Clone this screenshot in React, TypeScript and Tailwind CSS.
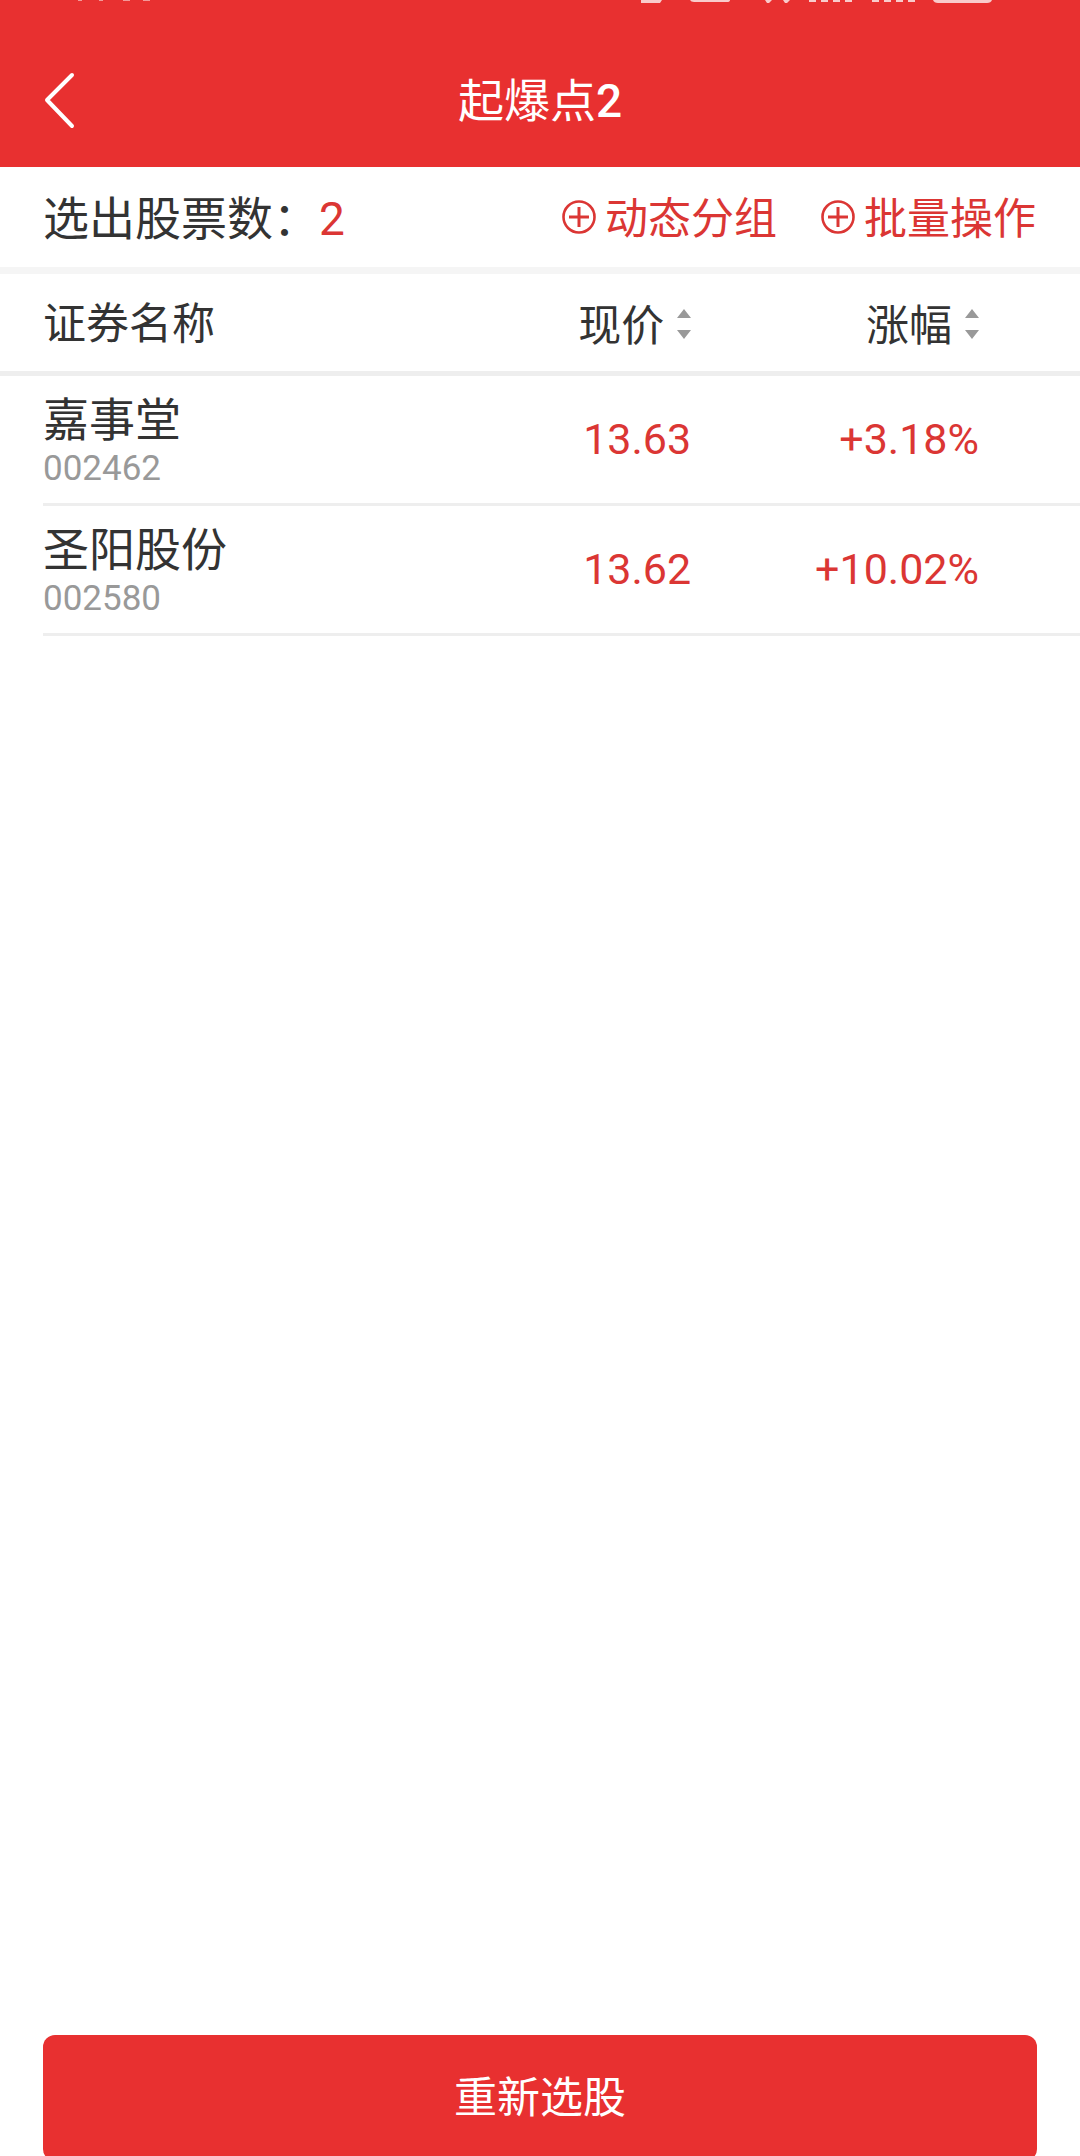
type Stock = { name: string; code: string; price: string; change: string };

const stocks: Stock[] = [
    { name: "嘉事堂", code: "002462", price: "13.63", change: "+3.18%" },
    { name: "圣阳股份", code: "002580", price: "13.62", change: "+10.02%" },
];

const StatusBar = () => {
    return (
        <div className="flex justify-between pl-[76px] pr-[80px] text-white h-[4px]">
            <svg width="80" height="4" fill="currentColor" opacity="0.5" aria-hidden="true">
                <path d="M2 0h4v1H2zM23 0h4v1h-4zM47 0h7v1h-7zM67 0h7v1h-7z" />
            </svg>
            <svg width="360" height="4" fill="currentColor" opacity="0.75" aria-hidden="true">
                <path d="M1 0h21l-2 3H1zM50 0h40q0 2-3 2H54q-3 0-4-2zM125 0h7l-3 3h-2zM143 0h7l-3 3h-2z" />
                <path d="M169 0h7v2h-7zM181 0h7v2h-7zM193 0h7v2h-7zM205 0h7v2h-7z" />
                <path d="M232 0h7v2h-7zM244 0h7v2h-7zM256 0h7v2h-7zM268 0h7v2h-7z" />
                <path d="M293 0h59q-1 3-5 3H298q-4 0-5-3z" />
            </svg>
        </div>
    );
}

const PlusCircle = () => {
    return (
        <svg width="34" height="34" viewBox="0 0 34 34" fill="none" stroke="currentColor" aria-hidden="true">
            <circle cx="17" cy="17" r="15.5" strokeWidth="2.6" />
            <path d="M17 7v20M7 17h20" strokeWidth="3" />
        </svg>
    );
}

const ActionButton = ({label}:{label:string}) => {
    return (
        <button type="button" className="flex items-center gap-[9px] text-[43px] leading-[60px]">
            <PlusCircle />
            <span className="pt-1">{label}</span>
        </button>
    );
}

const SortButton = ({label}:{label:string}) => {
    return (
        <button type="button" className="inline-flex items-center gap-[13px] align-middle leading-[60px]">
            <span className="pt-1">{label}</span>
            <svg width="14" height="30" viewBox="0 0 14 30" fill="#999" aria-hidden="true">
                <path d="M7 0l7 9H0zM7 30l7-9H0z" />
            </svg>
        </button>
    );
}

const StockRow = ({name,code,price,change}:Stock) => {
    return (
        <tr>
            <td className="p-0 pl-[43px]">
                <div className="flex flex-col justify-center h-[130px] pt-1 border-b-3 border-[#eee]">
                    <span className="text-[46px] leading-[54px] text-[#333]">{name}</span>
                    <span className="text-[35px] leading-[44px] text-[#999]">{code}</span>
                </div>
            </td>
            <td className="p-0 text-right text-[43px] text-[#db3634]">
                <div className="flex items-center justify-end h-[130px] border-b-3 border-[#eee]">{price}</div>
            </td>
            <td className="p-0 text-right text-[43px] text-[#db3634]">
                <div className="flex items-center justify-end h-[130px] border-b-3 border-[#eee] pr-[101px]">{change}</div>
            </td>
        </tr>
    );
}

const App = () => {
    return (
        <div className="flex flex-col h-screen overflow-hidden bg-white text-[#333] font-[Roboto,'Noto_Sans_CJK_SC',sans-serif]">
            <header className="bg-[#e83030] text-white">
                <StatusBar />
                <div className="grid grid-cols-[1fr_auto_1fr] items-center h-[163px] px-[43px] pt-[30px]">
                    <button type="button" aria-label="返回" className="justify-self-start">
                        <svg width="34" height="58" viewBox="0 0 34 58" fill="none" stroke="currentColor" strokeWidth="4" strokeLinecap="round" strokeLinejoin="round">
                            <path d="M29 3L4 28l25 26" />
                        </svg>
                    </button>
                    <h1 className="text-[46px] leading-[60px] font-normal">起爆点<span className="font-medium">2</span></h1>
                </div>
            </header>

            <div className="flex items-center justify-between h-[107px] pl-[43px] pr-[44px] border-b-7 border-[#f5f5f5]">
                <p className="pt-1 text-[46px] leading-[60px]">
                    选出股票数：<span className="text-[#db3634]">2</span>
                </p>
                <div className="flex gap-[44px] text-[#db3634]">
                    <ActionButton label="动态分组" />
                    <ActionButton label="批量操作" />
                </div>
            </div>

            <table className="w-full table-fixed border-separate border-spacing-0">
                <colgroup>
                    <col />
                    <col className="w-[26%]" />
                    <col className="w-[36%]" />
                </colgroup>
                <thead>
                    <tr className="text-[43px]">
                        <th className="p-0 pl-[43px] pt-1 h-[102px] border-b-5 border-[#eee] text-left font-normal">证券名称</th>
                        <th className="p-0 border-b-5 border-[#eee] text-right font-normal"><SortButton label="现价" /></th>
                        <th className="p-0 pr-[101px] border-b-5 border-[#eee] text-right font-normal"><SortButton label="涨幅" /></th>
                    </tr>
                </thead>
                <tbody>
                    {stocks.map((stock) => <StockRow key={stock.code} {...stock} />)}
                </tbody>
            </table>

            <footer className="mt-auto px-[43px] -mb-[5px]">
                <button type="button" className="w-full h-[126px] rounded-xl bg-[#e83030] text-white text-[43px]">
                    重新选股
                </button>
            </footer>
        </div>
    );
}

export default App;
